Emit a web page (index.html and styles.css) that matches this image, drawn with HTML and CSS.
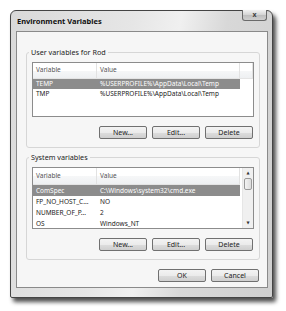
FILE: index.html
```html
<!DOCTYPE html>
<html lang="en">
  <head>
    <title>Environment Variables</title>
    <link rel="stylesheet" href="styles.css">
  </head>
  <body>
    <div class="window">
      <div class="titlebar">
        <span class="title">Environment Variables</span>
        <span class="close">x</span>
      </div>

      <div class="client">
        <!-- User variables -->
        <fieldset class="group">
          <legend>User variables for Rod</legend>
          <div class="list list-user">
            <div class="rows">
              <div class="row head">
                <span>Variable</span><span>Value</span><span></span>
              </div>
              <div class="row selected"><span>TEMP</span><span>%USERPROFILE%\AppData\Local\Temp</span></div>
              <div class="row"><span>TMP</span><span>%USERPROFILE%\AppData\Local\Temp</span></div>
            </div>
          </div>
          <div class="buttons">
            <button>New...</button>
            <button>Edit...</button>
            <button>Delete</button>
          </div>
        </fieldset>

        <!-- System variables -->
        <fieldset class="group">
          <legend>System variables</legend>
          <div class="list list-system">
            <div class="rows">
              <div class="row head">
                <span>Variable</span><span>Value</span>
              </div>
              <div class="row selected"><span>ComSpec</span><span>C:\Windows\system32\cmd.exe</span></div>
              <div class="row"><span>FP_NO_HOST_C...</span><span>NO</span></div>
              <div class="row"><span>NUMBER_OF_P...</span><span>2</span></div>
              <div class="row"><span>OS</span><span>Windows_NT</span></div>
            </div>
            <div class="scrollbar">
              <span class="arrow">&#9650;</span>
              <span class="thumb"></span>
              <span class="track"></span>
              <span class="arrow">&#9660;</span>
            </div>
          </div>
          <div class="buttons">
            <button>New...</button>
            <button>Edit...</button>
            <button>Delete</button>
          </div>
        </fieldset>

        <div class="buttons dialog-buttons">
          <button>OK</button>
          <button>Cancel</button>
        </div>
      </div>
    </div>
  </body>
</html>
```

FILE: styles.css
```css
body {
  margin: 0;
  padding: 10px;
  background-color: white;
  font-family: "Noto Sans", "DejaVu Sans", sans-serif;
  font-size: 7px;
  color: #222;
}

.window {
  width: 252px;
  height: 279px;
  padding: 0 4px 7px 5px;
  border: 1px solid #444;
  border-radius: 6px 6px 2px 2px;
  background: linear-gradient(100deg, #d9d9d9 0%, #e6e6e6 40%, #f0f0f0 55%, #d8d8d8 70%, #cfcfcf 100%);
  box-shadow: 3px 4px 4px rgba(0, 0, 0, 0.7);
}

.titlebar {
  display: flex;
  justify-content: space-between;
  align-items: flex-start;
  height: 20px;
}

.title {
  margin: 5px 0 0 1px;
  font-size: 7.5px;
  font-weight: bold;
  color: #111;
}

.close {
  width: 23px;
  height: 10px;
  margin: -1px 1px 0 0;
  border: 1px solid #6a6a6a;
  border-top: none;
  border-radius: 0 0 3px 3px;
  background: linear-gradient(#f2f2f2, #d2d2d2 50%, #bdbdbd 51%, #cfcfcf);
  font-size: 7px;
  font-weight: bold;
  line-height: 9px;
  text-align: center;
  color: #444;
}

.client {
  height: 240px;
  padding: 15px 7px 0 9px;
  border: 1px solid #8a8a8a;
  background-color: #f6f6f6;
}

.group {
  margin: 0 0 4px 0;
  padding: 0 5px 8px 5px;
  border: 1px solid #d6d6d6;
  border-radius: 3px;
}

.group legend {
  margin-left: -3px;
  padding: 0 2px;
  line-height: 10px;
  font-size: 7.2px;
}

.list {
  display: flex;
  margin-top: 5px;
  border: 1px solid #8c8c8c;
  background-color: white;
  font-size: 6.5px;
}

.list-user {
  height: 53px;
}

.list-system {
  height: 60px;
}

.rows {
  flex: 1;
}

.row {
  display: grid;
  grid-template-columns: 64px 143px;
  width: 207px;
  height: 10px;
  line-height: 10px;
}

.list-system .row {
  height: 11px;
  line-height: 11px;
}

.row span {
  padding-left: 3px;
  white-space: nowrap;
  overflow: hidden;
}

.row.head {
  height: 15px;
  line-height: 14px;
  color: #555;
  background: linear-gradient(white, white 50%, #f6f7f8 51%, #eef0f2);
  border-bottom: 1px solid #e4e4e4;
}

.list-system .row.head {
  height: 16px;
  line-height: 15px;
}

.row.head span {
  border-right: 1px solid #e2e2e2;
}

.list-user .row.head {
  grid-template-columns: 64px 143px 1fr;
  width: auto;
}

.row.selected {
  background-color: #8c8c8c;
  color: white;
}

.scrollbar {
  display: flex;
  flex-direction: column;
  width: 10px;
  border-left: 1px solid #e6e6e6;
  background-color: #f0f0f0;
}

.arrow {
  height: 10px;
  font-size: 4px;
  line-height: 10px;
  text-align: center;
  color: #333;
}

.thumb {
  height: 10px;
  margin: 0 1px;
  border: 1px solid #9a9a9a;
  border-radius: 2px;
  background: linear-gradient(90deg, #f4f4f4, #dcdcdc);
}

.track {
  flex: 1;
}

.buttons {
  display: flex;
  justify-content: flex-end;
  gap: 5px;
  margin-top: 9px;
  padding-right: 1px;
}

button {
  width: 48px;
  height: 13px;
  padding: 0;
  border: 1px solid #707070;
  border-radius: 2px;
  background: linear-gradient(#f3f3f3, #ebebeb 50%, #dddddd 51%, #cfcfcf);
  font-family: inherit;
  font-size: 7px;
  color: #222;
}

.dialog-buttons {
  margin-top: 9px;
  padding-right: 1px;
}
```
